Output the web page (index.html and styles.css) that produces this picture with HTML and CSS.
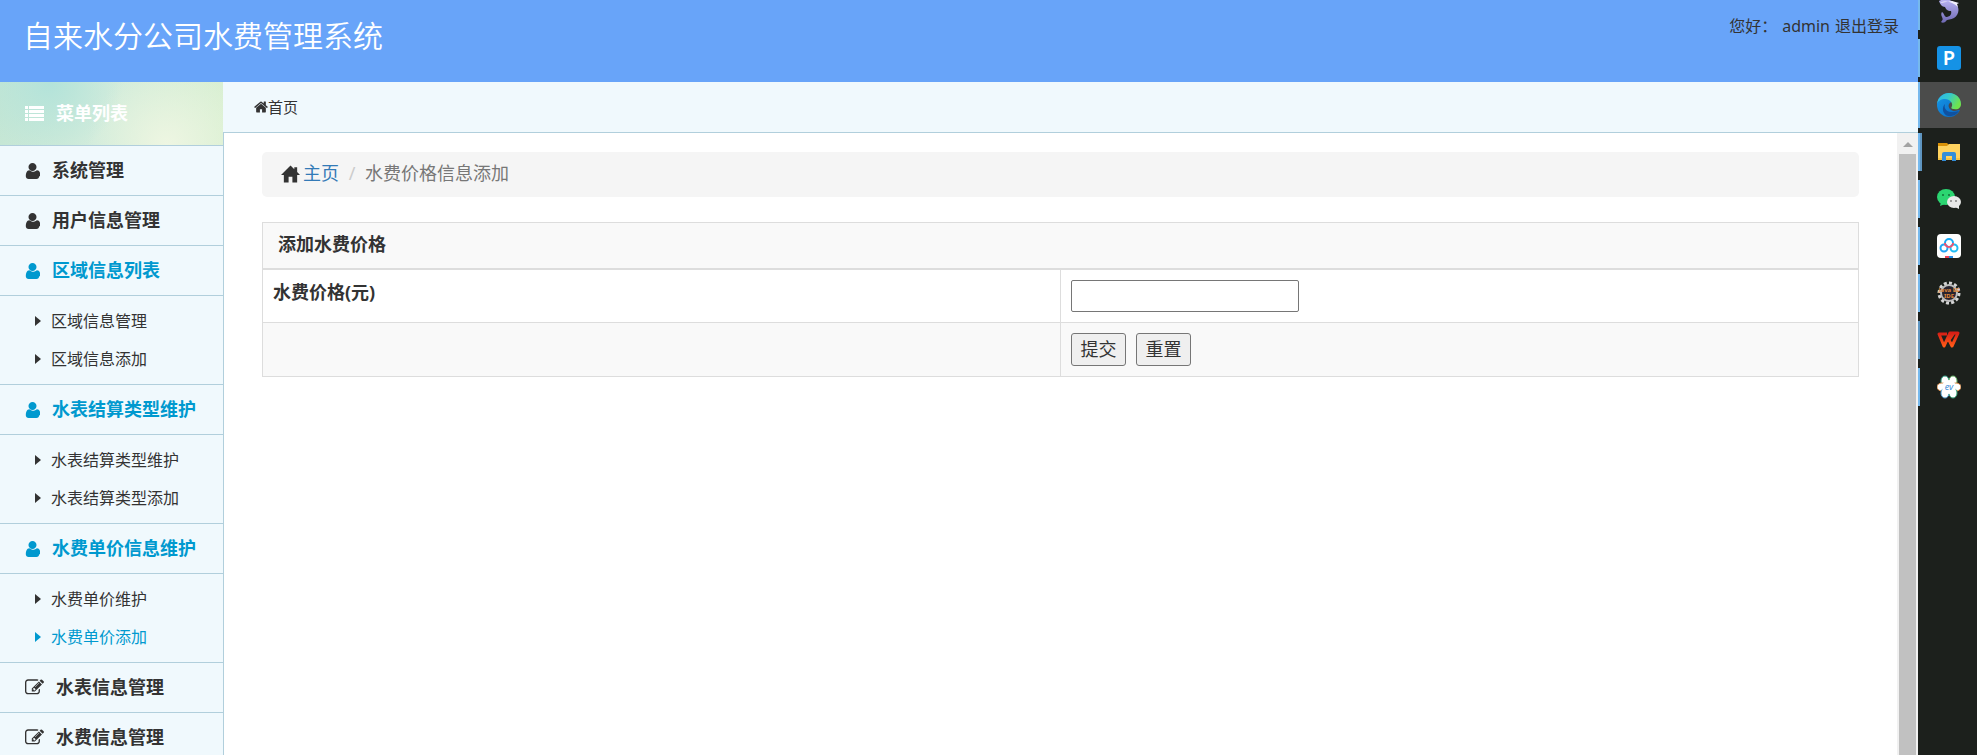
FILE: index.html
```html
<!DOCTYPE html>
<html lang="zh-CN">
<head>
    <meta charset="UTF-8">
    <meta name="viewport" content="width=device-width, initial-scale=1.0">
    <title>自来水分公司水费管理系统</title>
    <link rel="stylesheet" href="styles.css">
</head>
<body>

    <!-- shared icons -->
    <svg class="sprite" aria-hidden="true">
        <symbol id="icon-user" viewBox="0 128 1280 1530"><path d="M1280 1399q0 120-73 189.5t-194 69.5h-746q-121 0-194-69.5t-73-189.5q0-53 3.5-103.5t14-109 26.5-108.5 43-97.5 62-81 85.5-53.5 111.5-20q9 0 42 21.5t74.5 48 108 48 133.5 21.5 133.5-21.5 108-48 74.5-48 42-21.5q61 0 111.5 20t85.5 53.5 62 81 43 97.5 26.5 108.5 14 109 3.5 103.5zm-256-887q0 159-112.5 271.5t-271.5 112.5-271.5-112.5-112.5-271.5 112.5-271.5 271.5-112.5 271.5 112.5 112.5 271.5z"/></symbol>
        <symbol id="icon-edit" viewBox="0 0 1792 1792"><path d="M888 1184l116-116-152-152-116 116v56h96v96h56zm440-720q-16-16-33 1l-350 350q-17 17-1 33t33-1l350-350q17-17 1-33zm80 594v190q0 119-84.5 203.5t-203.5 84.5h-832q-119 0-203.5-84.5t-84.5-203.5v-832q0-119 84.5-203.5t203.5-84.5h832q63 0 117 25 15 7 18 23 3 17-9 29l-49 49q-14 14-32 8-23-6-45-6h-832q-66 0-113 47t-47 113v832q0 66 47 113t113 47h832q66 0 113-47t47-113v-126q0-13 9-22l64-64q15-15 35-7t20 29zm-96-738l288 288-672 672h-288v-288zm444 132l-92 92-288-288 92-92q28-28 68-28t68 28l152 152q28 28 28 68t-28 68z"/></symbol>
        <symbol id="icon-home" viewBox="64 224 1664 1344"><path d="M1472 992v480q0 26-19 45t-45 19h-384v-384h-256v384h-384q-26 0-45-19t-19-45v-480q0-1 .5-3t.5-3l575-474 575 474q1 2 1 6zm223-69l-62 74q-8 9-21 11h-3q-13 0-21-7l-692-577-692 577q-12 8-24 7-13-2-21-11l-62-74q-8-10-7-23.5t11-21.5l719-599q32-26 76-26t76 26l244 204v-195q0-14 9-23t23-9h192q14 0 23 9t9 23v408l219 182q10 8 11 21.5t-7 23.5z"/></symbol>
        <symbol id="icon-house" viewBox="0 0 20 18"><path d="M10 0L14 4V2H17V7L20 10H17V18H12V12H8V18H3V10H0Z"/></symbol>
        <symbol id="icon-list" viewBox="0 0 19 15"><path d="M0 0h3v3H0zM4 0h15v3H4zM0 4h3v3H0zM4 4h15v3H4zM0 8h3v3H0zM4 8h15v3H4zM0 12h3v3H0zM4 12h15v3H4z"/></symbol>
        <symbol id="icon-caret" viewBox="0 0 6 10"><path d="M0 0L6 5L0 10Z"/></symbol>
    </svg>

    <div class="screen">
        <div class="app">
            <header class="header">
                <h1 class="title">自来水分公司水费管理系统</h1>
                <div class="user">
                    <span>您好：</span>
                    <span>admin</span>
                    <a href="#">退出登录</a>
                </div>
            </header>

            <div class="body">
                <!-- left menu -->
                <nav class="sidebar">
                    <div class="menu-head"><svg class="icon-list"><use href="#icon-list"/></svg>菜单列表</div>

                    <a class="menu" href="#"><svg class="icon-user"><use href="#icon-user"/></svg>系统管理</a>
                    <a class="menu" href="#"><svg class="icon-user"><use href="#icon-user"/></svg>用户信息管理</a>

                    <a class="menu open" href="#"><svg class="icon-user"><use href="#icon-user"/></svg>区域信息列表</a>
                    <div class="submenu">
                        <a href="#"><svg class="icon-caret"><use href="#icon-caret"/></svg>区域信息管理</a>
                        <a href="#"><svg class="icon-caret"><use href="#icon-caret"/></svg>区域信息添加</a>
                    </div>

                    <a class="menu open" href="#"><svg class="icon-user"><use href="#icon-user"/></svg>水表结算类型维护</a>
                    <div class="submenu">
                        <a href="#"><svg class="icon-caret"><use href="#icon-caret"/></svg>水表结算类型维护</a>
                        <a href="#"><svg class="icon-caret"><use href="#icon-caret"/></svg>水表结算类型添加</a>
                    </div>

                    <a class="menu open" href="#"><svg class="icon-user"><use href="#icon-user"/></svg>水费单价信息维护</a>
                    <div class="submenu">
                        <a href="#"><svg class="icon-caret"><use href="#icon-caret"/></svg>水费单价维护</a>
                        <a class="active" href="#"><svg class="icon-caret"><use href="#icon-caret"/></svg>水费单价添加</a>
                    </div>

                    <a class="menu" href="#"><svg class="icon-edit"><use href="#icon-edit"/></svg>水表信息管理</a>
                    <a class="menu" href="#"><svg class="icon-edit"><use href="#icon-edit"/></svg>水费信息管理</a>
                </nav>

                <div class="main">
                    <div class="crumbs"><svg class="icon-home"><use href="#icon-home"/></svg><a href="#">首页</a></div>

                    <div class="frame">
                        <main class="content">
                            <div class="breadcrumb">
                                <svg class="icon-house"><use href="#icon-house"/></svg>
                                <a href="#">主页</a>
                                <span class="slash">/</span>
                                <span class="current">水费价格信息添加</span>
                            </div>

                            <form>
                                <table class="table">
                                    <thead>
                                        <tr><th colspan="2">添加水费价格</th></tr>
                                    </thead>
                                    <tbody>
                                        <tr>
                                            <td><label for="price">水费价格(元)</label></td>
                                            <td><input class="price" type="text" id="price" name="price"></td>
                                        </tr>
                                        <tr class="odd">
                                            <td></td>
                                            <td>
                                                <div class="buttons">
                                                    <button type="submit">提交</button>
                                                    <button type="reset">重置</button>
                                                </div>
                                            </td>
                                        </tr>
                                    </tbody>
                                </table>
                            </form>
                        </main>

                        <div class="scrollbar">
                            <div class="scroll-up"><svg viewBox="0 0 10 5"><path d="M0 5L5 0L10 5Z"/></svg></div>
                            <div class="scroll-thumb"></div>
                        </div>
                    </div>
                </div>
            </div>
        </div>

        <!-- system taskbar -->
        <aside class="taskbar">
            <div class="task">
                <svg viewBox="0 0 24 24">
                    <defs><linearGradient id="dolphin" x1="0" y1="0" x2="0" y2="1"><stop offset="0" stop-color="#b9b4f2"/><stop offset="1" stop-color="#6f69b4"/></linearGradient></defs>
                    <path fill="url(#dolphin)" d="M2 2C7-1 14 0 19 5C23 9 22 16 17 19C14 21 10 20 9 22C8 24 5 24 4 23C6 21 6 20 5 18C4 16 4 14 5 13C7 14 7 17 9 18C13 18 15 15 14 12C10 12 9 10 8 8C5 8 3 5 2 2Z"/>
                    <path fill="#f1effc" d="M3 4C8 1 16 3 21 8L20 5L22 4L15 2Z"/>
                </svg>
            </div>
            <div class="task">
                <div class="tile-p">P</div>
            </div>
            <div class="task current-task">
                <svg viewBox="0 0 24 24">
                    <defs>
                        <linearGradient id="edge-top" x1="0" y1="0" x2="1" y2=".4"><stop offset="0" stop-color="#2bb3ed"/><stop offset=".5" stop-color="#36c8cb"/><stop offset="1" stop-color="#6fe34c"/></linearGradient>
                        <linearGradient id="edge-low" x1="0" y1="0" x2="1" y2="1"><stop offset="0" stop-color="#1798e8"/><stop offset="1" stop-color="#0667c4"/></linearGradient>
                    </defs>
                    <circle cx="12" cy="12" r="12" fill="url(#edge-low)"/>
                    <path fill="#10519f" d="M8 11C6 17 12 21 22 18C18 24 10 25 7 20C5 17 6 13 8 11Z"/>
                    <path fill="#4b4c4b" d="M13 10C10 12 12 18 18 18L22 17L25 18V11L14 9Z"/>
                    <path fill="url(#edge-top)" d="M0 11C1 4 6 0 12 0C19 0 24 5 24 11C24 15 21 17 17 16C14 16 14 15 15 13C16 10 13 6 8 6C4 6 1 8 0 11Z"/>
                </svg>
            </div>
            <div class="task stacked">
                <svg viewBox="0 0 24 24">
                    <path fill="#d99208" d="M1 3h9l2 2v3H1z"/>
                    <path fill="#ffd35f" d="M1 6h9l2-2h11v16H1z"/>
                    <path fill="#f6c443" d="M1 18h22v2H1z"/>
                    <path fill="#338ed8" d="M5 21v-7q0-2 2-2h10q2 0 2 2v7h-4v-5H9v5z"/>
                </svg>
            </div>
            <div class="task">
                <svg viewBox="0 0 24 24">
                    <ellipse cx="9" cy="10" rx="9" ry="8" fill="#2bd571"/>
                    <path fill="#2bd571" d="M4 15L3 19L8 17Z"/>
                    <circle cx="6" cy="8" r="1" fill="#12703a"/><circle cx="12" cy="8" r="1" fill="#12703a"/>
                    <ellipse cx="17" cy="15" rx="7" ry="6" fill="#e8e8e8"/>
                    <path fill="#e8e8e8" d="M18 20L22 22L22 18Z"/>
                    <circle cx="14" cy="14" r="1" fill="#858585"/><circle cx="19" cy="14" r="1" fill="#858585"/>
                </svg>
            </div>
            <div class="task">
                <svg viewBox="0 0 24 24">
                    <rect width="24" height="24" rx="4" fill="#fff"/>
                    <g fill="none" stroke-width="2">
                        <circle cx="7" cy="14" r="3.500" stroke="#20a5f5"/>
                        <circle cx="17" cy="14" r="3.500" stroke="#20bdf5"/>
                        <path d="M8 9a4 4 0 0 1 8 0" stroke="#18a9f5"/>
                        <path d="M8 9a4 4 0 0 0 8 0" stroke="#f05070"/>
                    </g>
                    <path fill="#ef4358" d="M8 22h4v2H8z"/><path fill="#258ee9" d="M12 22h4v2h-4z"/>
                </svg>
            </div>
            <div class="task">
                <svg viewBox="0 0 24 24">
                    <circle cx="12" cy="12" r="10" fill="none" stroke="#d4d4d4" stroke-width="3" stroke-dasharray="3 2.200"/>
                    <circle cx="12" cy="12" r="8" fill="#29242f" stroke="#bdbdbd" stroke-width="2"/>
                    <text class="ide-text" x="12" y="11">Java EE</text>
                    <text class="ide-text" x="12" y="17">IDE</text>
                </svg>
            </div>
            <div class="task dim">
                <svg viewBox="0 0 24 24">
                    <defs><linearGradient id="wps" x1="0" y1="0" x2="0" y2="1"><stop offset="0" stop-color="#d71f16"/><stop offset="1" stop-color="#ff5a18"/></linearGradient></defs>
                    <path fill="none" stroke="url(#wps)" stroke-width="3" stroke-linejoin="round" d="M10 6H2L7 18L13 5H17L12 12L15 18L21 5H17"/>
                </svg>
            </div>
            <div class="task">
                <svg viewBox="0 0 24 24">
                    <g fill="#fff" stroke-width="1">
                        <ellipse cx="8" cy="6" rx="4" ry="5" stroke="#35a68b"/>
                        <ellipse cx="16" cy="6" rx="4" ry="5" stroke="#67b667"/>
                        <ellipse cx="5" cy="12" rx="5" ry="4" stroke="#e09553"/>
                        <ellipse cx="19" cy="12" rx="5" ry="4" stroke="#d98b45"/>
                        <ellipse cx="8" cy="18" rx="4" ry="5" stroke="#58a7d8"/>
                        <ellipse cx="16" cy="18" rx="4" ry="5" stroke="#39a87c"/>
                    </g>
                    <circle cx="12" cy="12" r="7" fill="#fff"/>
                    <text class="ev-text" x="12" y="15">ev</text>
                </svg>
            </div>
        </aside>
    </div>

</body>
</html>
```
FILE: styles.css
```css
* {
    box-sizing: border-box;
}

body {
    margin: 0;
    font-family: "Noto Sans", "Noto Sans CJK SC", sans-serif;
    font-size: 18px;
    line-height: 25px;
    color: #333;
}

a {
    color: inherit;
    text-decoration: none;
}

svg {
    display: block;
    flex: none;
    fill: currentColor;
}

.sprite {
    position: absolute;
    width: 0;
    height: 0;
}

.screen {
    display: flex;
    height: 100vh;
    overflow: hidden;
}

.app {
    flex: 1;
    min-width: 0;
    display: flex;
    flex-direction: column;
}

/* Header */
.header {
    flex: none;
    display: flex;
    justify-content: space-between;
    align-items: flex-start;
    height: 82px;
    padding: 14px 19px 0 23px;
    background-color: #68a4f9;
}

.title {
    margin: 0;
    font-size: 30px;
    font-weight: 350;
    line-height: 44px;
    color: #fff;
}

.user {
    display: flex;
    gap: 5px;
    font-size: 16px;
    line-height: 24px;
}

.body {
    flex: 1;
    min-height: 0;
    display: flex;
}

/* Left menu */
.sidebar {
    flex: none;
    width: 223px;
    background-color: #f0f9fd;
    font-weight: bold;
}

.menu-head {
    display: flex;
    align-items: center;
    gap: 12px;
    height: 64px;
    padding-left: 25px;
    border-bottom: 1px solid #b1cfdc;
    color: #fff;
    background:
        radial-gradient(circle at 22% 0, #b3e3da 0, transparent 40%),
        radial-gradient(circle at 75% 100%, #eef6e2 0, transparent 45%),
        linear-gradient(100deg, #c4e6d4 0%, #d2ecdc 45%, #daf0d2 100%);
}

.menu {
    display: flex;
    align-items: center;
    gap: 12px;
    height: 50px;
    padding-left: 25px;
    border-bottom: 1px solid #b1cfdc;
}

.menu.open,
.submenu .active {
    color: #0099cf;
}

.submenu {
    padding: 6px 0;
    border-bottom: 1px solid #b1cfdc;
    font-size: 16px;
    font-weight: normal;
}

.submenu a {
    display: flex;
    align-items: center;
    gap: 10px;
    height: 38px;
    padding-left: 35px;
}

.icon-list {
    width: 19px;
    height: 15px;
}

.icon-user {
    width: 15px;
    height: 16px;
}

.icon-edit {
    width: 19px;
    height: 19px;
}

.icon-caret {
    width: 6px;
    height: 10px;
}

/* Right side */
.main {
    flex: 1;
    min-width: 0;
    display: flex;
    flex-direction: column;
}

.crumbs {
    flex: none;
    display: flex;
    align-items: center;
    height: 51px;
    padding-left: 31px;
    background-color: #f0f9fd;
    border-bottom: 1px solid #b1cfdc;
    font-size: 15px;
}

.icon-home {
    width: 14px;
    height: 12px;
}

.frame {
    flex: 1;
    min-height: 0;
    display: flex;
    border-left: 1px solid #b1cfdc;
    background-color: #fff;
}

.content {
    flex: 1;
    min-width: 0;
    padding: 19px 38px;
}

.breadcrumb {
    display: flex;
    align-items: center;
    height: 45px;
    margin-bottom: 25px;
    padding: 0 19px 2px;
    border-radius: 5px;
    background-color: #f5f5f5;
}

.breadcrumb a {
    margin-left: 3px;
    color: #337ab7;
}

.icon-house {
    width: 19px;
    height: 18px;
}

.slash {
    width: 26px;
    text-align: center;
    color: #ccc;
}

.current {
    color: #777;
}

.table {
    width: 100%;
    table-layout: fixed;
    border-collapse: collapse;
    border: 1px solid #ddd;
}

.table th {
    padding: 9px 15px 11px;
    border-bottom: 2px solid #ddd;
    background-color: #f9f9f9;
    text-align: left;
}

.table td {
    padding: 10px;
    border: 1px solid #ddd;
    vertical-align: top;
}

.table label {
    display: block;
    font-weight: bold;
    line-height: 24px;
}

.odd {
    background-color: #f9f9f9;
}

.price {
    display: block;
    width: 228px;
    height: 32px;
    padding: 1px 2px;
    border: 1px solid #767676;
    border-radius: 2px;
    font: inherit;
}

.buttons {
    display: flex;
    gap: 10px;
}

.buttons button {
    width: 55px;
    height: 33px;
    padding: 0;
    border: 1px solid #767676;
    border-radius: 3px;
    background-color: #efefef;
    font: inherit;
    color: inherit;
}

.scrollbar {
    flex: none;
    display: flex;
    flex-direction: column;
    width: 21px;
    padding: 0 2px;
    background-color: #f1f1f1;
}

.scroll-up {
    display: flex;
    justify-content: center;
    height: 21px;
    padding-top: 9px;
    color: #a3a3a3;
}

.scroll-up svg {
    width: 10px;
    height: 5px;
}

.scroll-thumb {
    flex: 1;
    background-color: #c1c1c1;
}

/* Taskbar */
.taskbar {
    flex: none;
    display: flex;
    flex-direction: column;
    gap: 1px;
    width: 59px;
    margin-top: -12px;
    background-color: #1c201c;
}

.task {
    position: relative;
    display: flex;
    flex: none;
    align-items: center;
    justify-content: center;
    height: 46px;
    padding-left: 3px;
}

.task svg {
    width: 24px;
    height: 24px;
}

/* running mark on the left edge */
.task::before {
    content: "";
    position: absolute;
    left: 0;
    top: 4px;
    bottom: 4px;
    width: 2px;
    background-color: #76b9ed;
}

.current-task {
    background-color: #4b4c4b;
}

.current-task::before {
    top: 0;
    bottom: 0;
}

.stacked::before {
    border-right: 2px solid #5f96c1;
}

.dim::before {
    background-color: #5f96c1;
}

.tile-p {
    width: 24px;
    height: 24px;
    border-radius: 3px;
    background-color: #1592e6;
    font-size: 20px;
    font-weight: 600;
    line-height: 24px;
    text-align: center;
    color: #fff;
}

.ide-text {
    font-size: 6px;
    font-weight: bold;
    text-anchor: middle;
    fill: #e08a3c;
}

.ev-text {
    font-size: 9px;
    font-style: italic;
    text-anchor: middle;
    fill: #3f8fd8;
}
```
